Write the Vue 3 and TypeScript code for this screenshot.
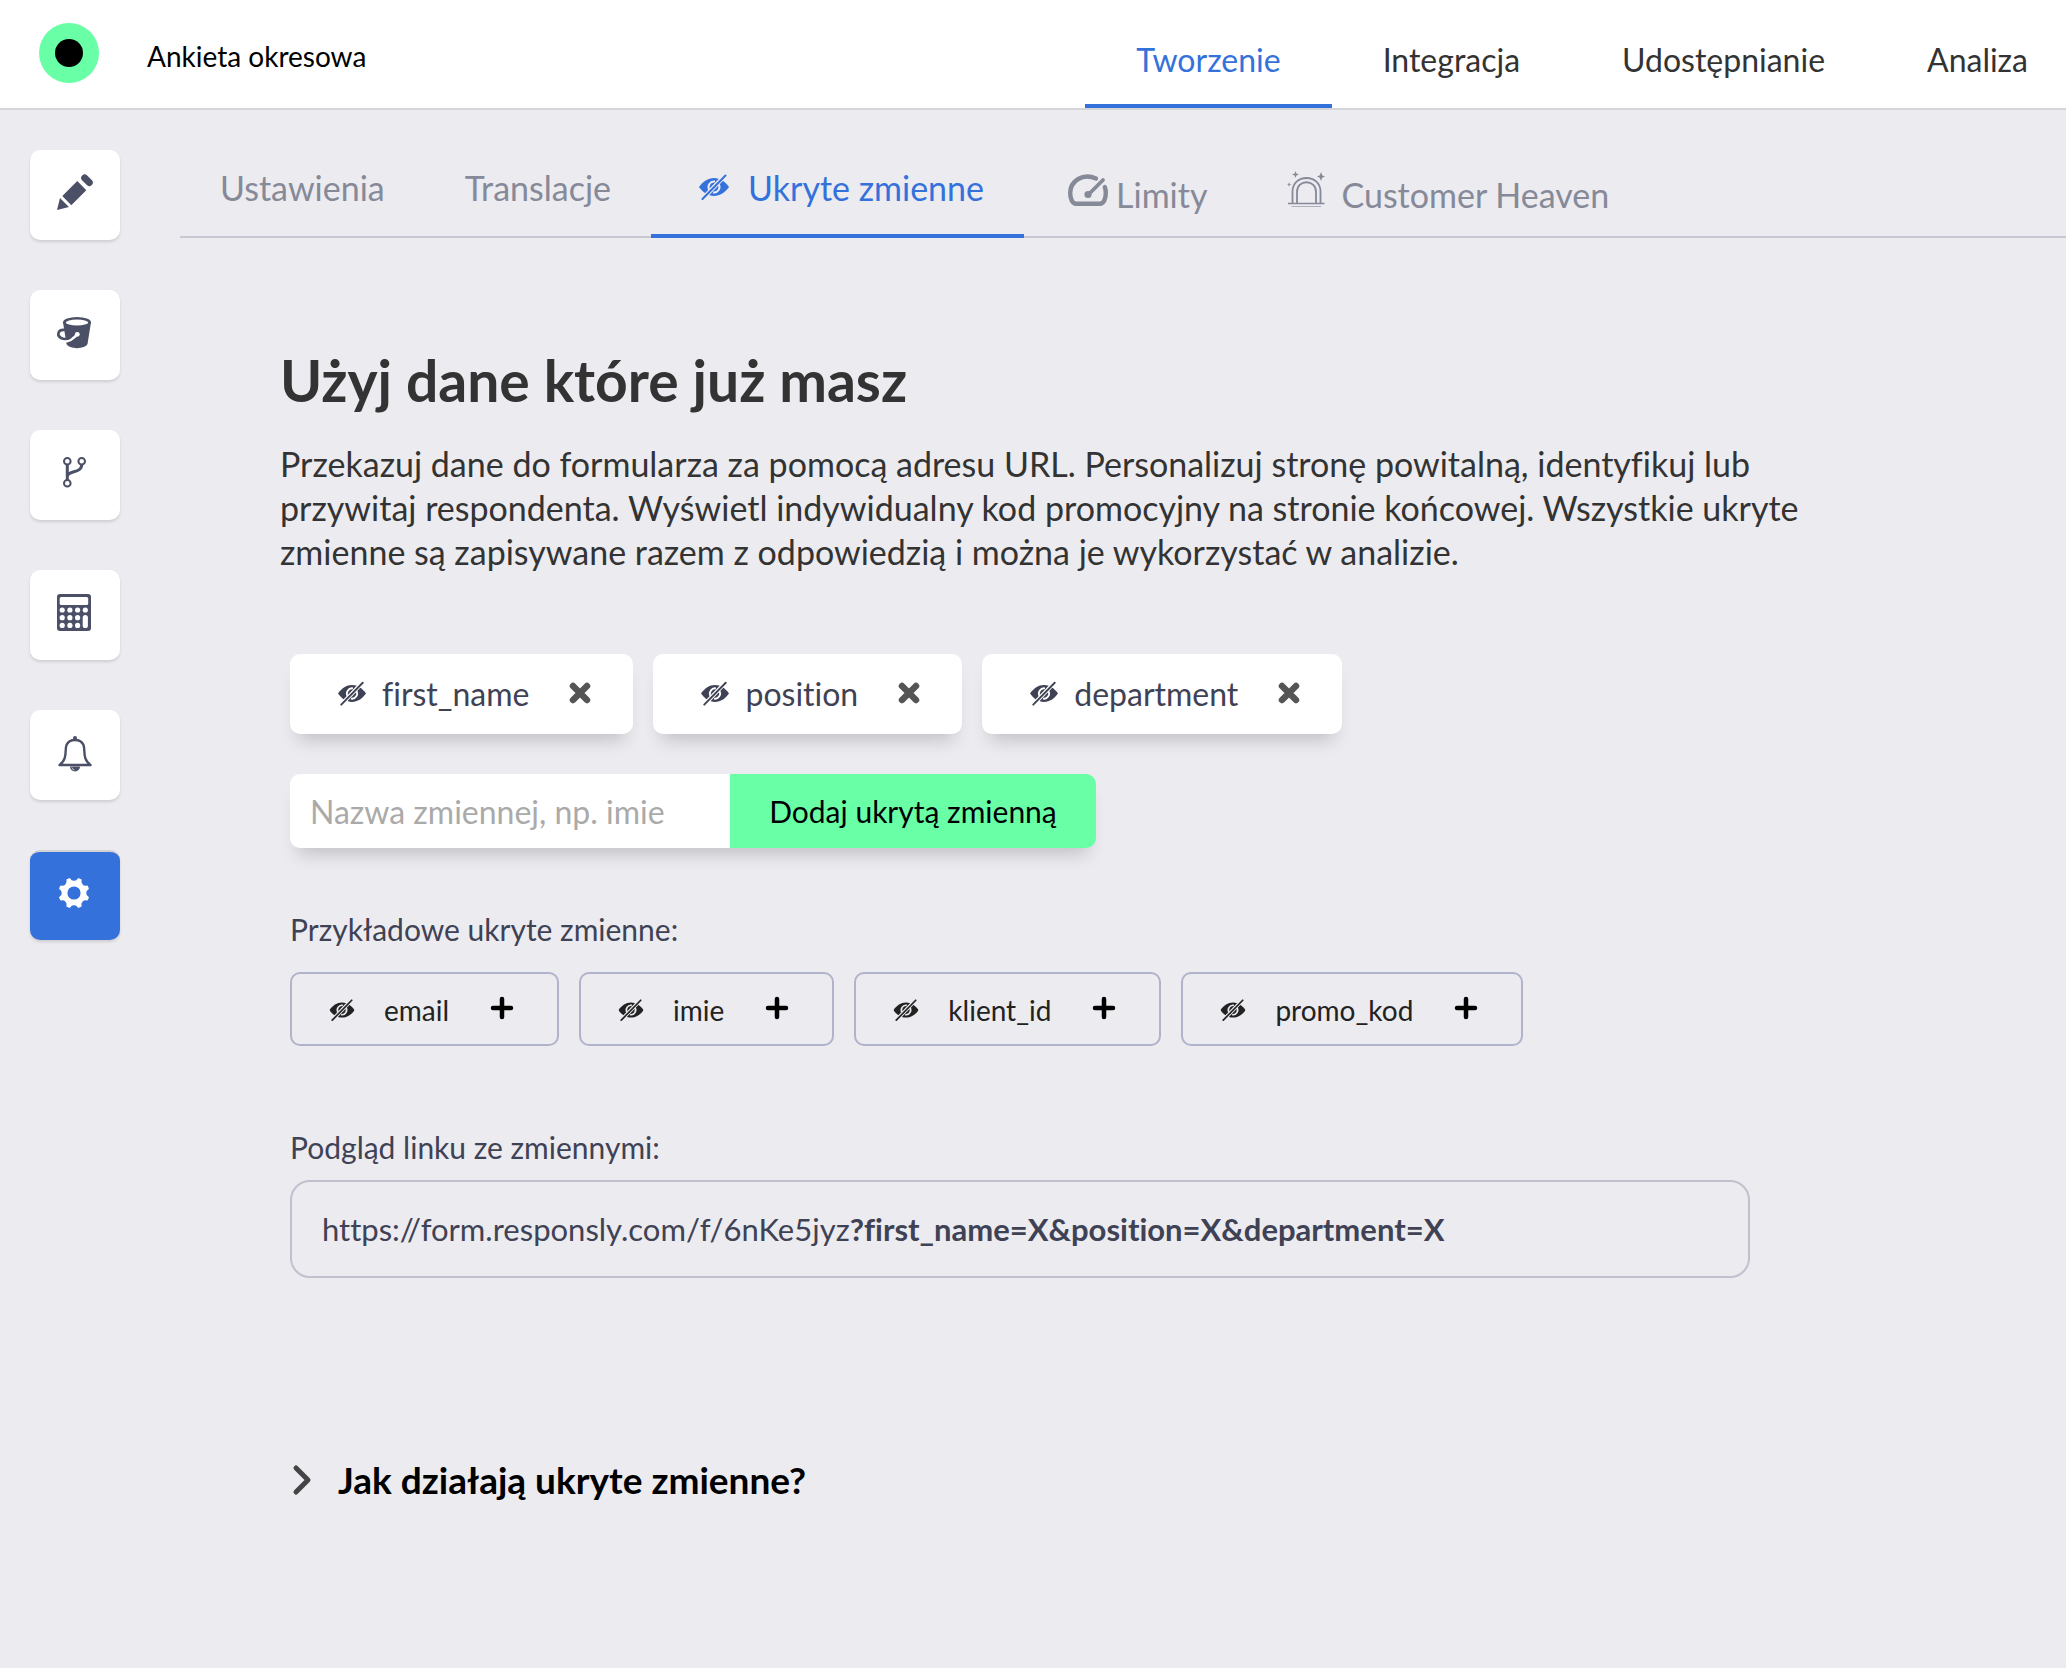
<script setup lang="ts">
import { ref } from 'vue'

interface NavItem {
  label: string
  active?: boolean
}

interface SubTab extends NavItem {
  icon?: 'eye' | 'gauge' | 'alarm'
}

const navItems: NavItem[] = [
  { label: 'Tworzenie', active: true },
  { label: 'Integracja' },
  { label: 'Udostępnianie' },
  { label: 'Analiza' },
]

const subTabs: SubTab[] = [
  { label: 'Ustawienia' },
  { label: 'Translacje' },
  { label: 'Ukryte zmienne', icon: 'eye', active: true },
  { label: 'Limity', icon: 'gauge' },
  { label: 'Customer Heaven', icon: 'alarm' },
]

const tools = [
  { id: 'pencil', label: 'Edycja' },
  { id: 'bucket', label: 'Wygląd' },
  { id: 'branch', label: 'Logika' },
  { id: 'calculator', label: 'Kalkulator' },
  { id: 'bell', label: 'Powiadomienia' },
  { id: 'gear', label: 'Ustawienia', active: true },
]

const variables = ref<string[]>(['first_name', 'position', 'department'])
const examples = ['email', 'imie', 'klient_id', 'promo_kod']
const draft = ref('')

function add(name: string): void {
  const value = name.trim()
  if (value && !variables.value.includes(value)) variables.value.push(value)
}

function submit(): void {
  add(draft.value)
  draft.value = ''
}

function remove(name: string): void {
  variables.value = variables.value.filter((v) => v !== name)
}

/* Eight-toothed gear outline around (19, 21) */
function gearPath(): string {
  const at = (deg: number, r: number): string => {
    const a = (deg * Math.PI) / 180
    return `${(19 + r * Math.cos(a)).toFixed(2)} ${(21 + r * Math.sin(a)).toFixed(2)}`
  }
  let d = ''
  for (let k = 0; k < 8; k++) {
    const t = 22.5 + 45 * k
    d += `${k === 0 ? 'M' : 'L'}${at(t - 5, 14.8)}L${at(t + 5, 14.8)}Q${at(t + 9, 11.5)} ${at(t + 22.5, 11.5)}Q${at(t + 36, 11.5)} ${at(t + 40, 14.8)}`
  }
  return d + 'Z'
}
const gear = gearPath()
</script>

<template>
  <svg class="sprite" aria-hidden="true">
    <defs>
      <mask id="eye-cut" maskUnits="userSpaceOnUse" x="0" y="0" width="30" height="26">
        <rect width="30" height="26" fill="#fff" />
        <path d="M10.500 16A5.500 5.500 0 0 1 16 7.500M19.500 10A5.500 5.500 0 0 1 14 18.500" fill="none" stroke="#000" stroke-width="2" />
        <path d="M27.500 0L2.500 26" stroke="#000" stroke-width="4.400" />
      </mask>
      <symbol id="eye-off" viewBox="0 0 30 26">
        <path d="M0 13C4 7.500 9 4 15 4S26 7.500 30 13C26 18.500 21 22 15 22S4 18.500 0 13Z" fill="currentColor" mask="url(#eye-cut)" />
        <path d="M26.500 1.500L3.500 25" stroke="currentColor" stroke-width="2" stroke-linecap="round" />
      </symbol>
    </defs>
  </svg>

  <header class="top">
    <a class="brand" href="#" aria-label="Strona główna"><span class="brand-dot"></span></a>
    <span class="survey">Ankieta okresowa</span>
    <nav class="nav">
      <a v-for="n in navItems" :key="n.label" href="#" class="nav-link" :class="{ active: n.active }">{{ n.label }}</a>
    </nav>
  </header>

  <div class="layout">
    <aside class="tools">
      <button v-for="t in tools" :key="t.id" type="button" class="tool" :class="{ active: t.active }" :aria-label="t.label">
        <svg class="tool-icon" viewBox="0 0 40 40" fill="currentColor">
          <g v-if="t.id === 'pencil'">
            <path d="M2 38L5 26L14 35ZM7.300 24L22.300 9L31.300 18.300L16.300 33.300Z" />
            <path d="M29.700 6L34.300 10.500" stroke="currentColor" stroke-width="7" stroke-linecap="round" />
          </g>
          <g v-else-if="t.id === 'bucket'">
            <path d="M8 10.300L11.500 32C14 37.500 30 37.500 32.500 32L36 10.300Z" />
            <ellipse cx="22" cy="10.300" rx="14" ry="5.300" />
            <ellipse cx="22" cy="10.500" rx="11.200" ry="3" fill="#fff" />
            <path d="M8 29.500C14 30 18 27.500 22.500 22" fill="none" stroke="#fff" stroke-width="2.600" stroke-linecap="round" />
            <circle cx="22.300" cy="22.300" r="2.400" fill="#fff" />
            <path d="M10 18C2 17 2 24 6 26C9 27.500 13 27 16 25" fill="none" stroke="currentColor" stroke-width="2.600" />
          </g>
          <g v-else-if="t.id === 'branch'" fill="none" stroke="currentColor">
            <path d="M12.300 12.500V28M26.700 12.500C26.700 21.500 14 18 12.300 24" stroke-width="3" />
            <g stroke-width="2">
              <circle cx="12.300" cy="9.300" r="3.300" />
              <circle cx="26.700" cy="9.300" r="3.300" />
              <circle cx="12.300" cy="31.300" r="3.300" />
            </g>
          </g>
          <g v-else-if="t.id === 'calculator'">
            <rect x="2" y="2" width="34" height="37" rx="3" />
            <g fill="#fff">
              <rect x="4.700" y="5" width="28.500" height="8" rx="1.500" />
              <template v-for="y in [18, 25.7, 33.4]" :key="y">
                <circle v-for="x in [7.2, 14.9, 22.6]" :key="x" :cx="x" :cy="y" r="2.600" />
              </template>
              <circle cx="30.300" cy="18" r="2.600" />
              <rect x="27.700" y="23.100" width="5.200" height="13" rx="2.600" />
            </g>
          </g>
          <g v-else-if="t.id === 'bell'">
            <circle cx="20" cy="6" r="2" />
            <path d="M4.500 33C13 27 9.500 18 11.500 13C13 9.500 16 8 20 8S27 9.500 28.500 13C30.500 18 27 27 35.500 33Z" fill="none" stroke="currentColor" stroke-width="2.400" stroke-linejoin="round" />
            <path d="M15 34.500A5 5 0 0 0 25 34.500Z" />
            <path d="M16.800 35.500A3.500 3.500 0 0 0 19.500 38" fill="none" stroke="#fff" stroke-width="0.700" />
          </g>
          <g v-else>
            <path :d="gear" stroke="currentColor" stroke-width="1.500" stroke-linejoin="round" />
            <circle cx="19" cy="21" r="6.600" fill="#3571db" />
          </g>
        </svg>
      </button>
    </aside>

    <main class="main">
      <nav class="tabs">
        <a v-for="s in subTabs" :key="s.label" href="#" class="tab" :class="[s.icon, { active: s.active }]">
          <svg v-if="s.icon === 'eye'" class="tab-eye"><use href="#eye-off" /></svg>
          <svg v-else-if="s.icon === 'gauge'" class="tab-gauge" viewBox="0 0 40 32" fill="none" stroke="currentColor" stroke-linecap="round">
            <path d="M28 4.500C15 -1.500 2.200 7 2.200 19C2.200 24 4 29.800 8 29.800H32C36 29.800 37.800 24 37.800 19C37.800 17 37.500 15 36.800 13" stroke-width="4.400" />
            <path d="M35 6L21 20" stroke-width="3.800" />
            <circle cx="20" cy="20.500" r="2.400" fill="currentColor" stroke-width="2.400" />
          </svg>
          <svg v-else-if="s.icon === 'alarm'" class="tab-alarm" viewBox="0 0 38 36" fill="none" stroke="currentColor" stroke-width="1.800">
            <path d="M5.500 31V19.500C5.500 1.500 33.500 1.500 33.500 19.500V31M10 31V20C10 7 29 7 29 20V31" />
            <path d="M1 31.500H37.500" stroke-width="1.500" />
            <path d="M4.500 34.500H34" stroke-width="1" opacity="0.600" />
            <g fill="currentColor" stroke="none">
              <path d="M8.500 -1L9.400 1.600L12 2.500L9.400 3.400L8.500 6L7.600 3.400L5 2.500L7.600 1.600Z" />
              <path d="M34 0L35.200 3.300L38 4.500L35.200 5.700L34 9L32.800 5.700L30 4.500L32.800 3.300Z" />
              <path d="M2 10L2.600 11.900L4.500 12.500L2.600 13.100L2 15L1.400 13.100L0 12.500L1.400 11.900Z" />
            </g>
          </svg>
          <span>{{ s.label }}</span>
        </a>
      </nav>

      <section class="content">
        <h1>Użyj dane które już masz</h1>
        <p class="lead">
          Przekazuj dane do formularza za pomocą adresu URL. Personalizuj stronę powitalną, identyfikuj lub
          przywitaj respondenta. Wyświetl indywidualny kod promocyjny na stronie końcowej. Wszystkie ukryte
          zmienne są zapisywane razem z odpowiedzią i można je wykorzystać w analizie.
        </p>

        <div class="panel">
          <ul class="chips">
            <li v-for="v in variables" :key="v" class="chip">
              <svg class="chip-eye"><use href="#eye-off" /></svg>
              <span>{{ v }}</span>
              <button type="button" class="remove" :aria-label="`Usuń ${v}`" @click="remove(v)">
                <svg viewBox="0 0 22 22"><path d="M4 4L18 18M18 4L4 18" stroke="currentColor" stroke-width="6.500" stroke-linecap="round" /></svg>
              </button>
            </li>
          </ul>

          <form class="add" @submit.prevent="submit">
            <input v-model="draft" type="text" aria-label="Nazwa zmiennej" placeholder="Nazwa zmiennej, np. imie" />
            <button type="submit">Dodaj ukrytą zmienną</button>
          </form>

          <h2 class="label">Przykładowe ukryte zmienne:</h2>
          <div class="examples">
            <button v-for="e in examples" :key="e" type="button" class="example" @click="add(e)">
              <svg class="example-eye"><use href="#eye-off" /></svg>
              <span>{{ e }}</span>
              <svg class="plus" viewBox="0 0 22 22"><path d="M11 2V20M2 11H20" stroke="currentColor" stroke-width="4.500" stroke-linecap="round" /></svg>
            </button>
          </div>

          <h2 class="label preview">Podgląd linku ze zmiennymi:</h2>
          <div class="link">https://form.responsly.com/f/6nKe5jyz<b>?<template v-for="(v, i) in variables" :key="v">{{ i ? '&' : '' }}{{ v }}=X</template></b></div>

          <details class="help">
            <summary>
              <svg viewBox="0 0 20 32" fill="none"><path d="M4 4L16 16L4 28" stroke="currentColor" stroke-width="5" stroke-linecap="round" stroke-linejoin="round" /></svg>
              <span>Jak działają ukryte zmienne?</span>
            </summary>
          </details>
        </div>
      </section>
    </main>
  </div>
</template>

<style>
body {
  margin: 0;
  background: #ebebf0;
  font-family: Lato, "Noto Sans", sans-serif;
  font-variant-ligatures: none;
  overflow-x: hidden;
}
</style>

<style scoped>
* {
  box-sizing: border-box;
}
a {
  color: inherit;
  text-decoration: none;
}
button,
input {
  font-family: inherit;
  border: 0;
  padding: 0;
  margin: 0;
}
button {
  cursor: pointer;
}
svg {
  display: block;
  flex: none;
  overflow: visible;
}
.sprite {
  position: absolute;
  width: 0;
  height: 0;
}

.top {
  display: flex;
  height: 110px;
  padding-left: 39px;
  background: #fff;
  border-bottom: 2px solid #d6d6d9;
}
.brand {
  display: flex;
  align-items: center;
  justify-content: center;
  width: 60px;
  height: 60px;
  margin-top: 23px;
  border-radius: 50%;
  background: #68ffa6;
}
.brand-dot {
  width: 28px;
  height: 28px;
  border-radius: 50%;
  background: #000;
}
.survey {
  margin-left: 48px;
  font-size: 28px;
  line-height: 112px;
  color: #000;
}
.nav {
  display: flex;
  margin-left: auto;
}
.nav-link {
  padding: 0 51px;
  border-bottom: 4px solid transparent;
  font-size: 32px;
  line-height: 120px;
  height: 108px;
  color: #333;
}
.nav-link:last-child {
  padding-right: 38px;
}
.nav-link.active {
  color: #3571db;
  border-color: #3571db;
}

.layout {
  display: flex;
}
.tools {
  display: flex;
  flex-direction: column;
  flex: none;
  gap: 50px;
  width: 180px;
  padding: 40px 30px;
}
.tool {
  display: flex;
  justify-content: center;
  width: 90px;
  height: 90px;
  padding-top: 22px;
  border-radius: 10px;
  background: #fff;
  color: #4b5066;
  box-shadow: 0 2px 3px rgba(0, 0, 0, 0.12);
}
.tool.active {
  padding-top: 20px;
  border-top: 2px solid #d0d0d5;
  background: #3571db;
  color: #fff;
}
.tool-icon {
  width: 40px;
  height: 40px;
}

.main {
  flex: 1;
  min-width: 0;
}
.tabs {
  display: flex;
  height: 128px;
  border-bottom: 2px solid #c8c8d3;
  font-size: 34px;
  color: #868998;
}
.tab {
  display: flex;
  align-items: center;
  height: 128px;
  padding: 30px 40px 0;
  border-bottom: 4px solid transparent;
  white-space: nowrap;
}
.tab.gauge,
.tab.alarm {
  padding-top: 44px;
}
.tab.active {
  color: #3571db;
  border-color: #3571db;
}
.tab-eye {
  width: 30px;
  height: 26px;
  margin: 0 19px 0 8px;
}
.tab-gauge {
  width: 40px;
  height: 32px;
  margin: 0 8px 8px 4px;
}
.tab-alarm {
  width: 38px;
  height: 36px;
  margin: 0 16px 8px 0;
}

.content {
  max-width: 1700px;
  padding: 110px 60px 0 100px;
}
h1 {
  margin: 0 0 30px;
  font-size: 57px;
  line-height: 64px;
  color: #333;
}
.lead {
  max-width: 1530px;
  margin: 0 0 80px;
  font-size: 34px;
  line-height: 44px;
  color: #333;
}
.panel {
  max-width: 1480px;
  padding: 0 10px;
  color: #3f4254;
}
.chips {
  display: flex;
  gap: 20px;
  margin: 0 0 40px;
  padding: 0;
  list-style: none;
}
.chip {
  display: flex;
  align-items: center;
  height: 80px;
  padding: 0 42px 2px 48px;
  border-radius: 10px;
  background: #fff;
  box-shadow: 0 14px 18px -8px rgba(0, 0, 0, 0.18);
  font-size: 32px;
}
.chip-eye {
  width: 28px;
  height: 25px;
  margin-right: 16px;
}
.remove {
  width: 22px;
  height: 22px;
  margin-left: 40px;
  background: none;
  color: #555;
}
.add {
  display: flex;
  width: 806px;
  height: 74px;
  margin-bottom: 64px;
  border-radius: 10px;
  box-shadow: 0 14px 18px -8px rgba(0, 0, 0, 0.18);
}
.add input {
  width: 440px;
  padding: 0 20px;
  border-radius: 10px 0 0 10px;
  background: #fff;
  font-size: 32px;
  color: #333;
}
.add input::placeholder {
  color: #aaa;
}
.add button {
  flex: 1;
  border-radius: 0 10px 10px 0;
  background: #68ffa6;
  font-size: 30px;
  color: #000;
}
.label {
  margin: 0 0 26px;
  font-size: 30px;
  font-weight: 400;
  line-height: 34px;
}
.label.preview {
  margin-bottom: 16px;
}
.examples {
  display: flex;
  gap: 20px;
  margin-bottom: 84px;
}
.example {
  display: flex;
  align-items: center;
  height: 74px;
  padding: 2px 44px 0 37px;
  border: 2px solid #b1b3cb;
  border-radius: 10px;
  background: none;
  font-size: 28px;
  color: #222;
}
.example-eye {
  width: 26px;
  height: 22px;
  margin-right: 29px;
}
.plus {
  width: 22px;
  height: 22px;
  margin: 0 0 4px 42px;
  color: #000;
}
.link {
  height: 98px;
  padding: 0 30px;
  border: 2px solid #c1c1ce;
  border-radius: 20px;
  font-size: 31px;
  line-height: 94px;
  white-space: nowrap;
}
.help {
  margin-top: 182px;
}
.help summary {
  display: flex;
  align-items: center;
  gap: 26px;
  font-size: 37px;
  font-weight: 700;
  line-height: 40px;
  color: #000;
  cursor: pointer;
  list-style: none;
}
.help svg {
  width: 20px;
  height: 32px;
  margin-left: 2px;
  color: #444;
}
</style>
